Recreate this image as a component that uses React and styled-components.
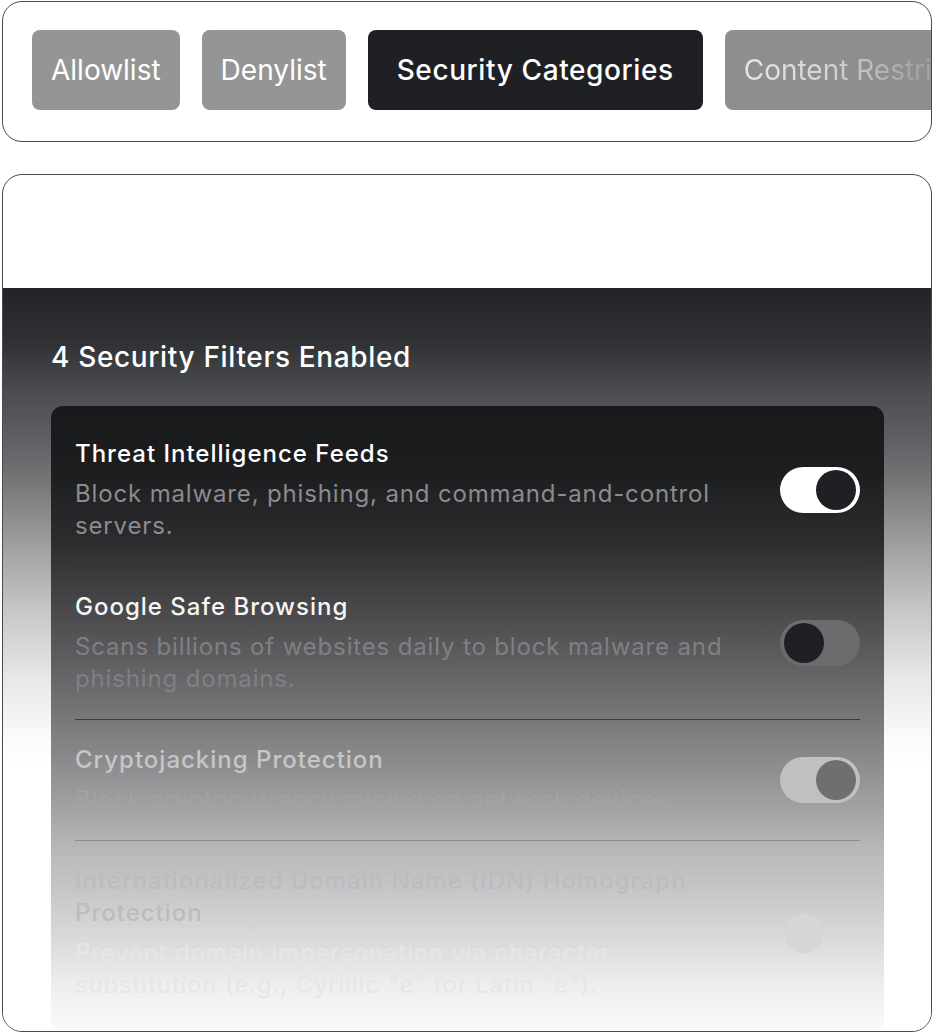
import React from 'react';
import styled, { createGlobalStyle } from 'styled-components';

const GlobalStyle = createGlobalStyle`
  html, body { margin: 0; padding: 0; background: #ffffff; }
  body { font-family: Inter, "Noto Sans", sans-serif; -webkit-font-smoothing: antialiased; }
  * { box-sizing: border-box; }
`;

const Page = styled.div`
  padding: 1px 1px 0 2px;
  display: flex;
  flex-direction: column;
  gap: 32px;
`;

const Card = styled.section`
  border: 1px solid #4a4a4a;
  border-radius: 20px;
  background: #ffffff;
  overflow: hidden;
`;

const TabCard = styled(Card)`
  padding: 28px 0 31px 29px;
`;

const TabRow = styled.nav`
  display: flex;
  gap: 22px;
  flex-wrap: nowrap;
`;

const Tab = styled.button`
  flex: 0 0 auto;
  height: 80px;
  padding: 0 ${(p) => (p.$active ? '29px' : '19px')};
  border: 0;
  border-radius: 8px;
  background: ${(p) => (p.$active ? '#1f2024' : p.$bg || '#959595')};
  color: #ffffff;
  font-family: Inter, "Noto Sans", sans-serif;
  font-size: 28px;
  font-weight: ${(p) => (p.$active ? 500 : 400)};
  letter-spacing: ${(p) => (p.$active ? '0.6px' : '0')};
  white-space: nowrap;
  cursor: pointer;
`;

const FadedLabel = styled.span`
  background: linear-gradient(90deg, #e6e6e6 0%, #d6d6d6 30%, #a6a6a6 62%, #9a9a9a 100%);
  -webkit-background-clip: text;
  background-clip: text;
  color: transparent;
`;

const CategoryCard = styled(Card)`
  height: 858px;
  display: flex;
  flex-direction: column;
`;

const CardHeader = styled.header`
  padding: 51px 48px 28px;
  font-size: 30px;
  line-height: 34px;
  font-weight: 600;
  color: #ffffff;
`;

const CardBody = styled.div`
  flex: 1;
  padding: 52px 47px 0 48px;
  background: linear-gradient(
    to bottom,
    #232428 0px,
    #2e3033 52px,
    #4a4c4f 102px,
    #5f6063 152px,
    #747577 192px,
    #a0a0a0 259px,
    #c8c8c8 325px,
    #e8e8e8 392px,
    #fafafa 449px,
    #ffffff 480px
  );
`;

const SectionTitle = styled.h2`
  margin: 0 0 32px;
  font-size: 28px;
  line-height: 34px;
  font-weight: 500;
  letter-spacing: 0.65px;
  color: #ffffff;
`;

const Panel = styled.div`
  border-radius: 12px;
  padding: 8px 24px;
  background: linear-gradient(
    to bottom,
    #18191b 0px,
    #1c1d1f 64px,
    #2c2c2e 134px,
    #454547 194px,
    #5a5a5c 244px,
    #707072 294px,
    #8a8a8c 354px,
    #a8a8aa 414px,
    #b8b8ba 444px,
    #cacacc 494px,
    #dedede 544px,
    #eeeeee 579px,
    #fafafa 624px
  );
`;

const Row = styled.div`
  display: flex;
  align-items: center;
  gap: 48px;
  padding: 24px 0;
  border-bottom: 1px solid ${(p) => p.$divider};
  &:last-child { border-bottom: 0; }
`;

const TextCol = styled.div`
  flex: 1;
  min-width: 0;
`;

const RowTitle = styled.div`
  font-size: 24px;
  line-height: 32px;
  font-weight: 500;
  letter-spacing: 1px;
  color: ${(p) => p.$color};
`;

const RowDesc = styled.div`
  margin-top: 8px;
  font-size: 24px;
  line-height: 32px;
  font-weight: 400;
  letter-spacing: 0.85px;
  color: ${(p) => p.$color};
`;

const Switch = styled.span`
  position: relative;
  flex: 0 0 auto;
  width: 80px;
  height: 46px;
  border-radius: 23px;
  background: ${(p) => p.$track};
`;

const Knob = styled.span`
  position: absolute;
  top: 3px;
  left: ${(p) => (p.$on ? '36px' : '4px')};
  width: 40px;
  height: 40px;
  border-radius: 50%;
  background: ${(p) => p.$knob};
`;

const filters = [
  {
    title: 'Threat Intelligence Feeds',
    desc: 'Block malware, phishing, and command-and-control servers.',
    on: true,
    titleColor: '#ffffff',
    descColor: '#8b8b90',
    track: '#ffffff',
    knob: '#1f2024',
    divider: '#353537',
  },
  {
    title: 'Google Safe Browsing',
    desc: 'Scans billions of websites daily to block malware and phishing domains.',
    on: false,
    titleColor: '#f6f6f6',
    descColor: '#808084',
    track: '#6c6c6e',
    knob: '#1f2024',
    divider: '#3c3c3e',
  },
  {
    title: 'Cryptojacking Protection',
    desc: 'Block cryptocurrency mining on network devices',
    on: true,
    titleColor: '#c6c6c6',
    descColor: '#a2a2a4',
    track: '#c0c0c0',
    knob: '#6f6f71',
    divider: '#8e8e90',
  },
  {
    title: 'Internationalized Domain Name (IDN) Homograph Protection',
    desc: 'Prevent domain impersonation via character substitution (e.g., Cyrillic "е" for Latin "e").',
    on: false,
    titleColor: '#bcbcbe',
    descColor: '#e6e6e6',
    track: 'transparent',
    knob: '#d6d6d6',
    divider: 'transparent',
  },
];

const tabs = [
  { label: 'Allowlist' },
  { label: 'Denylist' },
  { label: 'Security Categories', active: true },
  { label: 'Content Restrictions', faded: true, bg: '#8e8e8e' },
];

export default function App() {
  return (
    <>
      <GlobalStyle />
      <Page>
        <TabCard>
          <TabRow>
            {tabs.map((t) => (
              <Tab key={t.label} $active={t.active} $bg={t.bg}>
                {t.faded ? <FadedLabel>{t.label}</FadedLabel> : t.label}
              </Tab>
            ))}
          </TabRow>
        </TabCard>
        <CategoryCard>
          <CardHeader>Security Categories</CardHeader>
          <CardBody>
            <SectionTitle>4 Security Filters Enabled</SectionTitle>
            <Panel>
              {filters.map((f) => (
                <Row key={f.title} $divider={f.divider}>
                  <TextCol>
                    <RowTitle $color={f.titleColor}>{f.title}</RowTitle>
                    <RowDesc $color={f.descColor}>{f.desc}</RowDesc>
                  </TextCol>
                  <Switch $track={f.track} role="switch" aria-checked={f.on}>
                    <Knob $on={f.on} $knob={f.knob} />
                  </Switch>
                </Row>
              ))}
            </Panel>
          </CardBody>
        </CategoryCard>
      </Page>
    </>
  );
}
